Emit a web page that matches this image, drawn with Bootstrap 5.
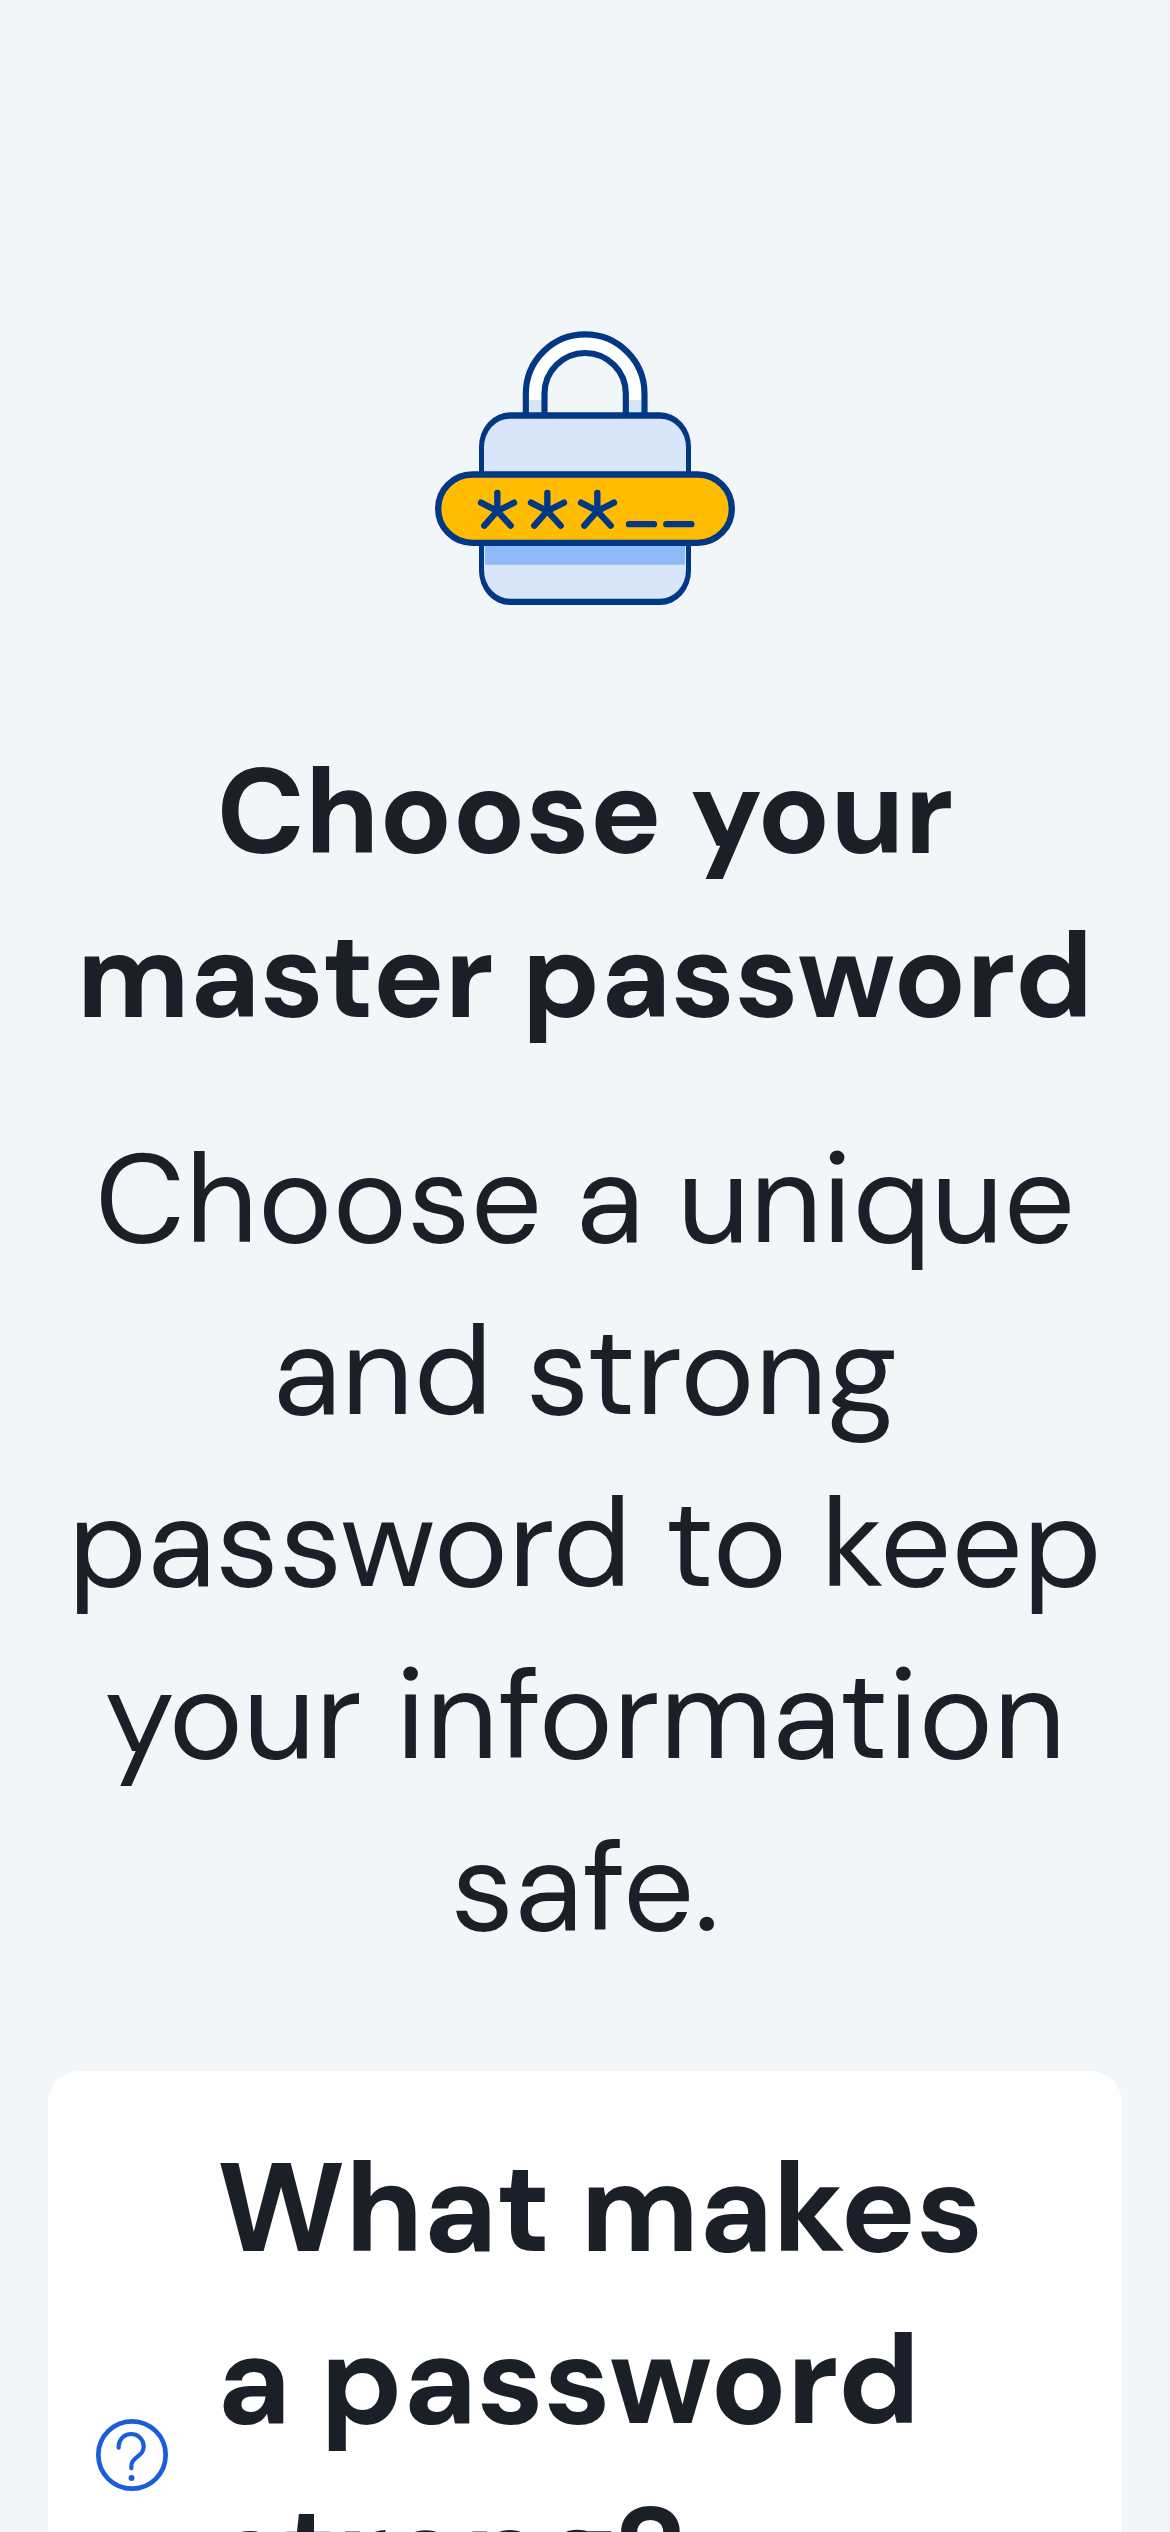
<!DOCTYPE html>
<html lang="en">
<head>
<meta charset="utf-8">
<meta name="viewport" content="width=device-width, initial-scale=1">
<title>Choose your master password</title>
<link href="https://cdn.jsdelivr.net/npm/bootstrap@5.3.0/dist/css/bootstrap.min.css" rel="stylesheet">
<style>
  body { background: #f2f6f9; color: #1b1f28; font-family: "DM Sans", Inter, sans-serif; }
  .screen { height: 2532px; padding: 310px 48px 0; }
  .lock-art { width: 330px; height: 310px; margin-bottom: 110px; }
  .page-title { font-size: 120px; line-height: 164px; margin-bottom: 55px; }
  .page-intro { font-size: 126px; line-height: 172px; margin-bottom: 98px; }
  .tip-panel { border-radius: 32px; padding: 51px 48px; gap: 49px; height: 900px; }
  .tip-title { font-size: 126px; line-height: 172px; }
  .tip-icon { width: 72px; height: 72px; margin-top: 297px; }
</style>
<script src="https://cdn.jsdelivr.net/npm/bootstrap@5.3.0/dist/js/bootstrap.bundle.min.js"></script>
</head>
<body class="overflow-hidden">
<main class="screen d-flex flex-column align-items-center overflow-hidden">
  <svg class="lock-art flex-shrink-0" viewBox="0 0 990 930" fill="none" aria-hidden="true">
    <!-- shackle -->
    <path d="M345 316V251a150 150 0 0 1 301 0v65" stroke="#fff" stroke-width="48"/>
    <path d="M326 270h40v40h-40zM625 270h40v40h-40z" fill="#d9e5f8"/>
    <path d="M317.5 316V251a178 178 0 0 1 356 0v65M373.5 316V251a122 122 0 0 1 244 0v65" stroke="#003886" stroke-width="18.5" stroke-linecap="square"/>
    <!-- body -->
    <path d="M270 307h450a93 103 0 0 1 93 103v372a93 103 0 0 1-93 103H270a93 103 0 0 1-93-103V410a93 103 0 0 1 93-103z" fill="#003886"/>
    <path d="M270 326h450a78 86 0 0 1 78 86v368a78 86 0 0 1-78 86H270a78 86 0 0 1-78-86V412a78 86 0 0 1 78-86z" fill="#d9e5f8"/>
    <path d="M195 700h600v64H195z" fill="#8fbaf8"/>
    <!-- password field -->
    <rect x="54.500" y="493.500" width="881" height="205" rx="102.500" fill="#ffbc00" stroke="#003886" stroke-width="19"/>
    <g stroke="#003886" stroke-width="19" stroke-linecap="round">
      <path d="M232 549v54M183 578l49 25 50-25M193 647l39-44 40 44"/>
      <path d="M382 549v54M333 578l49 25 50-25M343 647l39-44 40 44"/>
      <path d="M532 549v54M483 578l49 25 50-25M493 647l39-44 40 44"/>
      <path d="M627 642.500h75M739 642.500h75"/>
    </g>
  </svg>

  <h1 class="page-title fw-bold text-center text-nowrap flex-shrink-0">Choose your<br>master password</h1>

  <p class="page-intro text-center text-nowrap flex-shrink-0">Choose a unique<br>and strong<br>password to keep<br>your information<br>safe.</p>

  <section class="tip-panel d-flex align-items-start bg-white w-100 flex-shrink-0">
    <svg class="tip-icon flex-shrink-0" viewBox="0 0 216 216" fill="none" stroke="#175ddc" aria-hidden="true">
      <circle cx="108" cy="108" r="101" stroke-width="14"/>
      <path d="M68 86v-4a37.500 37 0 0 1 75 0c0 17-9 23-20 32-11 10-17 15-17 28v6" stroke-width="12.500" stroke-linecap="round"/>
      <circle cx="106.500" cy="177" r="9" fill="#175ddc" stroke="none"/>
    </svg>
    <h2 class="tip-title fw-bold text-nowrap mb-0">What makes<br>a password<br>strong?</h2>
  </section>
</main>
</body>
</html>
